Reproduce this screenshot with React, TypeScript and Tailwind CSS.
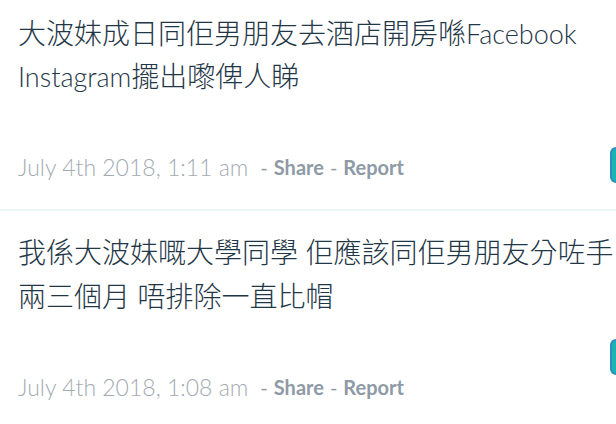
import React from "react";

const items = [
  {
    lines: [
      [["大波妹成日同佢男朋友去酒店開房喺", false], ["Facebook", true]],
      [["Instagram", true], ["擺出嚟俾人睇", false]],
    ],
    date: "July 4th 2018, 1:11 am",
  },
  {
    lines: [
      [["我係大波妹嘅大學同學 佢應該同佢男朋友分咗手", false]],
      [["兩三個月 唔排除一直比帽", false]],
    ],
    date: "July 4th 2018, 1:08 am",
  },
] as { lines: [string, boolean][][]; date: string }[];

export default function App() {
  return (
    <div
      className="w-[616px] h-[424px] overflow-hidden bg-white"
      style={{ fontFamily: "Lato, 'Noto Sans CJK TC', sans-serif" }}
    >
      {items.map((it, i) => (
        <div
          key={i}
          className={
            "relative pl-[18px] " +
            (i === 0 ? "pt-[12px] border-b-2 border-[#e8f6f6] pb-[28px]" : "pt-[19px]")
          }
        >
          {it.lines.map((l, j) => (
            <div
              key={j}
              className={
                "text-[28px] font-light text-[#1f3747] whitespace-nowrap " +
                (i === 0 ? "leading-[42px]" : "leading-[44px]")
              }
            >
              {l.map(([t, latin], k) =>
                latin ? (
                  <span key={k} className="text-[27px]">
                    {t}
                  </span>
                ) : (
                  <span key={k}>{t}</span>
                )
              )}
            </div>
          ))}
          <div className="mt-[55px] h-[28px] flex items-center whitespace-nowrap">
            <span className="text-[23px] font-light text-[#a3abb2]">{it.date}</span>
            <span className="ml-[12px] text-[20px] text-[#8e9aa5]">-</span>
            <span className="ml-[6px] text-[20px] font-bold text-[#8e9aa5]">Share</span>
            <span className="ml-[6px] text-[20px] text-[#8e9aa5]">-</span>
            <span className="ml-[6px] text-[20px] font-bold text-[#8e9aa5]">Report</span>
          </div>
          <div className="absolute right-[-20px] bottom-[26px] w-[26px] h-[36px] rounded-[6px] border-2 border-[#2a8fc0] bg-[#17b5b0]" />
        </div>
      ))}
    </div>
  );
}
